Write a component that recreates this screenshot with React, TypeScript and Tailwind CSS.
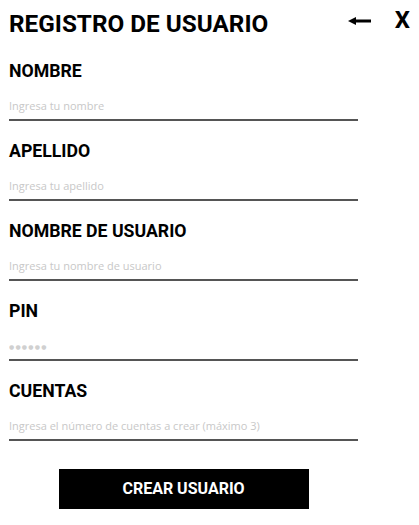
import React from "react";

const fields = [
  { label: "NOMBRE", placeholder: "Ingresa tu nombre", pin: false },
  { label: "APELLIDO", placeholder: "Ingresa tu apellido", pin: false },
  { label: "NOMBRE DE USUARIO", placeholder: "Ingresa tu nombre de usuario", pin: false },
  { label: "PIN", placeholder: "●●●●●●", pin: true },
  { label: "CUENTAS", placeholder: "Ingresa el número de cuentas a crear (máximo 3)", pin: false },
];

export default function App() {
  return (
    <div className="w-[419px] h-[525px] bg-white px-[9px] pt-[12px] overflow-hidden" style={{ fontFamily: "Roboto, sans-serif" }}>
      <div className="flex items-start w-[401px] h-[49px]">
        <h1 className="text-[24.3px] leading-[24px] font-bold text-black flex-1">REGISTRO DE USUARIO</h1>
        <button className="mt-[5px] mr-[24px]" aria-label="Volver">
          <svg width="23" height="8" viewBox="0 0 23 8">
            <path d="M0 4 L8 0 L8 8 Z" fill="#000" />
            <rect x="6" y="2.5" width="17" height="3" fill="#000" />
          </svg>
        </button>
        <button className="text-[24px] leading-[24px] font-bold text-black -mt-[4px]">X</button>
      </div>
      <div className="w-[349px] flex flex-col">
        {fields.map((f) => (
          <div key={f.label} className="h-[80px] flex flex-col">
            <label className="text-[17.7px] leading-[20px] font-bold text-black h-[20px]">{f.label}</label>
            {f.pin ? (
              <input
                type="text"
                placeholder={f.placeholder}
                className="h-[40px] pt-[15px] pb-[2px] border-b-2 border-[#555] text-[6px] tracking-[1.2px] outline-none placeholder:text-[#d0d0d0] bg-transparent"
                style={{ fontFamily: "'DejaVu Sans', sans-serif" }}
              />
            ) : (
              <input
                type="text"
                placeholder={f.placeholder}
                className="h-[40px] pt-[12px] pb-[2px] border-b-2 border-[#555] text-[11px] outline-none placeholder:text-[#c8c8c8] bg-transparent"
                style={{ fontFamily: "'Open Sans', sans-serif" }}
              />
            )}
          </div>
        ))}
        <button className="mt-[8px] mx-auto w-[250px] h-[40px] bg-black text-white text-[16px] font-bold">
          CREAR USUARIO
        </button>
      </div>
    </div>
  );
}
